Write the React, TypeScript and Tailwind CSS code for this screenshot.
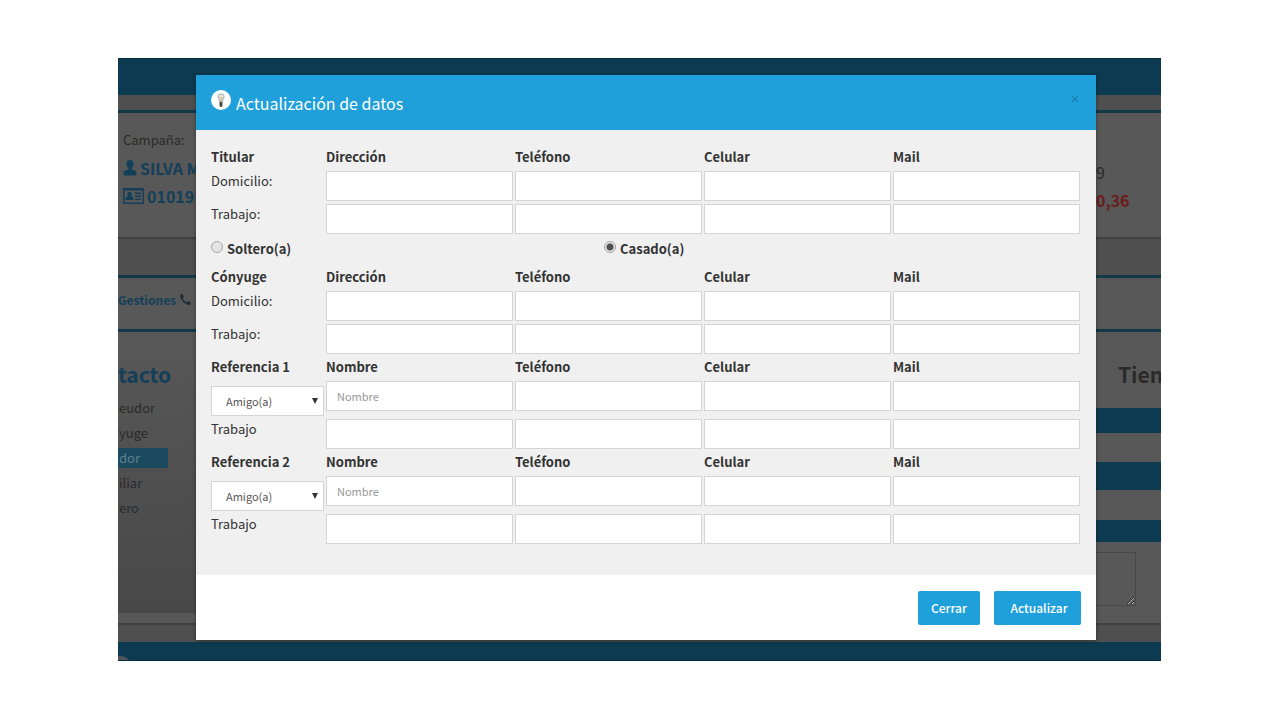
type Section = {
    title: string;
    first: string;
    reference?: boolean;
};

const holderSections: Section[] = [
    { title: 'Titular', first: 'Dirección' },
];

const otherSections: Section[] = [
    { title: 'Cónyuge', first: 'Dirección' },
    { title: 'Referencia 1', first: 'Nombre', reference: true },
    { title: 'Referencia 2', first: 'Nombre', reference: true },
];

const contacts = ['eudor', 'yuge', 'dor', 'iliar', 'ero'];

const rowClass = 'grid grid-cols-[113px_repeat(4,minmax(0,1fr))] gap-x-[2px] items-start';

const UserIcon = () => (
    <svg viewBox="0 0 14 16" className="w-[14px] h-4 shrink-0" fill="currentColor">
        <path d="M7 0C4.800 0 3.500 1.500 3.500 4c0 2 .9 3.800 2 4.600v.9C3 10 .5 10.500.5 13v1.500c0 .6.4 1 1 1h11c.6 0 1-.4 1-1V13c0-2.500-2.500-3-5-3.500v-.9c1.100-.8 2-2.600 2-4.600C10.500 1.500 9.200 0 7 0z" />
    </svg>
);

const IdCardIcon = () => (
    <svg viewBox="0 0 21 16" className="w-[21px] h-4 shrink-0" fill="currentColor" fillRule="evenodd">
        <path d="M1 0h19a1 1 0 0 1 1 1v14a1 1 0 0 1-1 1H1a1 1 0 0 1-1-1V1a1 1 0 0 1 1-1zM1.500 2.500v12h18v-12zM12 4.500h6V6h-6zM12 7.500h6V9h-6zM12 10.500h6V12h-6zM6.500 4a2.200 2.200 0 0 1 1.500 3.900c1.500.4 2.500 1.300 2.500 3.100v1h-8v-1c0-1.800 1-2.700 2.500-3.100A2.200 2.200 0 0 1 6.500 4z" />
    </svg>
);

const PhoneIcon = () => (
    <svg viewBox="0 0 11 11" className="size-[11px] shrink-0 text-[#222b33]" fill="currentColor">
        <path d="M11 8.700c0 .3-.1.900-.3 1.200-.3.600-1.200 1-1.900 1-1.500 0-3.800-1.200-5.400-2.900C1.500 6.200.2 4 .1 2.300 0 1.500.5.700 1.100.3 1.500.1 2 0 2.300 0c.3 0 1.500 2.400 1.600 2.700 0 .6-1.300 1.200-1.300 1.700 0 .6 3.500 4 4.100 4 .4 0 1.100-1.300 1.600-1.300.3 0 2.700 1.300 2.700 1.600z" />
    </svg>
);

const FieldRow = ({ section, label }: { section: Section; label: string }) => {
    const isRelation = label === 'relation';
    const name = isRelation ? 'Relación' : label;

    return (
        <div className={`${rowClass} pb-[3px]`}>
            {isRelation ? (
                <div className="relative pt-[5px]">
                    <select
                        aria-label={`${section.title} relación`}
                        className="block w-full h-[30px] appearance-none border border-[#d5d5d5] bg-white pl-[14px] text-[11px] text-[#555555]"
                    >
                        <option>Amigo(a)</option>
                    </select>
                    <svg viewBox="0 0 6 6" className="absolute right-[6px] top-[17px] w-[6px] h-[6px] pointer-events-none">
                        <path d="M0 0h6L3 6z" fill="#333333" />
                    </svg>
                </div>
            ) : (
                <span className="text-[13px] leading-5">{label}</span>
            )}
            {[section.first, 'Teléfono', 'Celular', 'Mail'].map((column, i) => (
                <input
                    key={column}
                    type="text"
                    aria-label={`${section.title} ${name} ${column}`}
                    placeholder={isRelation && i === 0 ? 'Nombre' : undefined}
                    className="w-full h-[30px] border border-[#d5d5d5] bg-white px-[10px] text-[11px] placeholder:text-[#999999]"
                />
            ))}
        </div>
    );
};

const FormSection = ({ section }: { section: Section }) => (
    <div>
        <div className={`${rowClass} h-6 text-[13px] leading-5 font-bold`}>
            <span>{section.title}</span>
            <span>{section.first}</span>
            <span>Teléfono</span>
            <span>Celular</span>
            <span>Mail</span>
        </div>
        <FieldRow section={section} label={section.reference ? 'relation' : 'Domicilio:'} />
        <FieldRow section={section} label={section.reference ? 'Trabajo' : 'Trabajo:'} />
    </div>
);

const radioClass =
    'appearance-none size-3 shrink-0 rounded-full border border-[#a8a8a8] bg-[#e4e4e4] checked:bg-[radial-gradient(circle,#505050_0_3px,#e4e4e4_4px)]';

const Backdrop = () => (
    <div className="col-start-1 row-start-1 min-w-0 overflow-hidden flex flex-col bg-[#4f4f4f] text-[#2a2a2a] whitespace-nowrap">
        <div className="h-[37px] shrink-0 bg-[#0c3a50] border-t border-[#082c3d]" />

        {/* Client summary */}
        <div className="mt-[15px] h-[127px] shrink-0 border-t-3 border-[#12394a] bg-[#585858] shadow-[0_2px_1px_#404040] flex justify-between">
            <div className="pl-[5px] pt-[17px]">
                <div className="text-[13px] leading-5">Campaña:</div>
                <div className="mt-1 flex items-center gap-[3px] text-[16px] leading-7 font-bold text-[#133f5a]">
                    <UserIcon /> SILVA M
                </div>
                <div className="flex items-center gap-[3px] text-[16px] leading-7 font-bold text-[#133f5a]">
                    <IdCardIcon /> 01019
                </div>
            </div>
            <div className="w-[65px] pt-[45px]">
                <div className="text-[16px] leading-7">9</div>
                <div className="text-[16px] leading-7 font-bold text-[#6b1c1c]">0,36</div>
            </div>
        </div>

        {/* Tabs */}
        <div className="mt-[38px] h-[54px] shrink-0 border-t-3 border-[#12394a] bg-[#585858] flex items-center text-[12px] font-bold text-[#133f5a]">
            <span className="flex items-center gap-1 pb-2">
                Gestiones <PhoneIcon />
            </span>
        </div>

        {/* Contact panel */}
        <div className="flex-1 border-t-3 border-[#12394a] bg-[#585858] shadow-[0_2px_1px_#404040] flex justify-between">
            <div className="w-[78px] mb-[10px] pt-[26px] bg-linear-to-b from-[#585858] to-[#484848]">
                <div className="text-[21px] leading-8 font-bold text-[#133f5a]">tacto</div>
                <ul className="pt-[5px] text-[13px]">
                    {contacts.map((item) => (
                        <li key={item} className="h-[25px] flex items-center">
                            <span
                                className={
                                    item === 'dor'
                                        ? 'w-[50px] leading-5 pl-[1px] bg-[#1b4a60] text-[#5e7f8d]'
                                        : 'leading-5 pl-[1px]'
                                }
                            >
                                {item}
                            </span>
                        </li>
                    ))}
                </ul>
            </div>
            <div className="w-[65px] pt-[26px]">
                <div className="pl-[22px] text-[21px] leading-8 font-bold">Tien</div>
                <div className="mt-[18px] h-[25px] bg-[#0c3a50]" />
                <div className="mt-[29px] h-7 bg-[#0c3a50]" />
                <div className="mt-[30px] h-[22px] bg-[#0c3a50]" />
                <textarea
                    aria-label="Observaciones"
                    className="block mt-[10px] w-10 h-[54px] border border-l-0 border-[#484848] bg-transparent resize"
                />
            </div>
        </div>

        <div className="mt-[19px] h-[19px] shrink-0 bg-[#0c3a50] border-b border-[#082c3d] overflow-hidden">
            <div className="mt-[14px] w-[14px] h-3 rounded-tr-full bg-[#4f5558]" />
        </div>
    </div>
);

const UpdateDialog = () => (
    <div
        role="dialog"
        aria-labelledby="dialog-title"
        className="col-start-1 row-start-1 z-10 min-w-0 mt-[17px] mb-[21px] ml-[78px] mr-[65px] bg-white text-[#333333] shadow-[0_1px_4px_rgba(0,0,0,0.4)]"
    >
        <div className="h-[55px] flex items-center justify-between bg-[#1fa0db] pl-[15px] pr-4 text-white">
            <div className="flex items-center gap-[5px]">
                <svg viewBox="0 0 20 20" className="mb-[5px] size-5">
                    <circle cx="10" cy="10" r="10" fill="#ffffff" />
                    <path d="M7 5.500a3.500 3 0 0 1 6 0c.6 2.500-1.300 3.500-1.500 6h-3C8.300 9 6.400 8 7 5.500z" fill="#e8e8df" stroke="#8c9798" strokeWidth=".8" />
                    <path d="M8.500 7l1.500 1.500L11.500 7M10 8.500v3" fill="none" stroke="#b99c45" strokeWidth=".8" />
                    <path d="M8.500 12h3v3.500l-.8 1.500H9.300l-.8-1.500z" fill="#454b50" />
                </svg>
                <h1 id="dialog-title" className="text-[16px] leading-6">Actualización de datos</h1>
            </div>
            <button aria-label="Close" className="mb-2 size-[10px] text-[#176e96]">
                <svg viewBox="0 0 10 10" className="size-[10px]">
                    <path d="M2 2l6 6M8 2L2 8" stroke="currentColor" />
                </svg>
            </button>
        </div>

        <form>
            <div className="bg-[#f0f0f0] pl-[15px] pr-4 pt-[17px] pb-7">
                {holderSections.map((section) => (
                    <FormSection key={section.title} section={section} />
                ))}
                <div className="h-[30px] grid grid-cols-[393px_1fr] text-[13px] leading-6 font-bold">
                    <label className="h-6 flex items-center gap-1">
                        <input type="radio" name="status" className={`${radioClass} mb-1`} /> Soltero(a)
                    </label>
                    <label className="h-6 flex items-center gap-1">
                        <input type="radio" name="status" defaultChecked className={`${radioClass} mb-1`} /> Casado(a)
                    </label>
                </div>
                {otherSections.map((section) => (
                    <FormSection key={section.title} section={section} />
                ))}
            </div>

            <div className="flex justify-end gap-[14px] px-[15px] pt-4 pb-[15px] text-[12px] font-medium text-white">
                <button type="button" className="w-[62px] h-[34px] rounded-[2px] bg-[#1fa0db]">Cerrar</button>
                <button type="button" className="w-[87px] h-[34px] pl-[3px] rounded-[2px] bg-[#1fa0db]">Actualizar</button>
            </div>
        </form>
    </div>
);

export default function App() {
    return (
        <main className="min-h-screen bg-white pl-[118px] pr-[119px] pt-[58px] pb-[59px] font-['Noto_Sans_CJK_SC','Open_Sans',sans-serif]">
            <div className="grid grid-cols-1">
                <Backdrop />
                <UpdateDialog />
            </div>
        </main>
    );
}
